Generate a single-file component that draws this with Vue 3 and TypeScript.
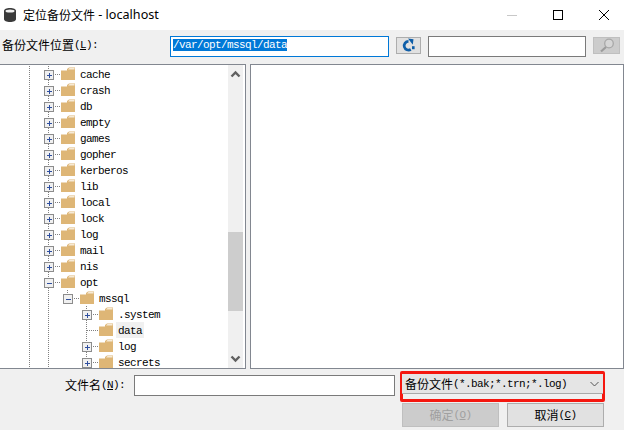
<script setup lang="ts">
interface Row {
  name: string
  guides: boolean[]
  exp: 'plus' | 'minus' | 'none'
  through: boolean
  top?: boolean
  selected?: boolean
}
const names = ['cache', 'crash', 'db', 'empty', 'games', 'gopher', 'kerberos', 'lib', 'local', 'lock', 'log', 'mail', 'nis']
const rows: Row[] = [
  ...names.map((name): Row => ({ name, guides: [true], exp: 'plus', through: true })),
  { name: 'opt', guides: [true], exp: 'minus', through: true },
  { name: 'mssql', guides: [true, true], exp: 'minus', through: false, top: true },
  { name: '.system', guides: [true, true, false], exp: 'plus', through: true },
  { name: 'data', guides: [true, true, false], exp: 'none', through: true, selected: true },
  { name: 'log', guides: [true, true, false], exp: 'plus', through: true },
  { name: 'secrets', guides: [true, true, false], exp: 'plus', through: true }
]
</script>

<template>
  <div class="win">
    <header class="title">
      <svg class="dbicon" width="14" height="14" viewBox="0 0 14 14">
        <path d="M1 3C1 1 3.500 0 7 0s6 1 6 3v8c0 2-2.500 3-6 3s-6-1-6-3z" fill="#3a3a3a" />
        <ellipse cx="7" cy="3" rx="4.500" ry="1.500" fill="#f0f0f0" />
      </svg>
      <span class="cjk-title">定位备份文件</span><span class="title-en">&nbsp;- localhost</span>
      <div class="controls">
        <span class="ctl"><svg width="12" height="12" viewBox="0 0 12 12"><path d="M1 6.500h10" stroke="#c8c8c8" /></svg></span>
        <span class="ctl"><svg width="12" height="12" viewBox="0 0 12 12"><rect x="1.500" y="1.500" width="9" height="9" fill="none" stroke="#000" /></svg></span>
        <span class="ctl"><svg width="12" height="12" viewBox="0 0 12 12"><path d="M1 1l10 10M11 1L1 11" stroke="#000" fill="none" /></svg></span>
      </div>
    </header>

    <div class="toolbar">
      <label class="path-label"><span class="cjk">备份文件位置</span><span class="mono">(<u>L</u>):</span></label>
      <div class="path-input"><span class="mono sel">/var/opt/mssql/data</span></div>
      <button class="refresh">
        <svg width="15" height="15" viewBox="0 0 15 15">
          <path d="M7.500 3.300A4.400 4.400 0 1 0 9.800 11.500" fill="none" stroke="#0f5ea8" stroke-width="2.700" />
          <path d="M7 0.500L12.500 1.200 11.800 6.800z" fill="#0f5ea8" />
          <rect x="11" y="8.200" width="2.600" height="3" fill="#0f5ea8" />
        </svg>
      </button>
      <div class="search-input"></div>
      <button class="search" disabled>
        <svg width="18" height="15" viewBox="0 0 18 15">
          <circle cx="11" cy="5.500" r="4.300" fill="#d6d6d6" stroke="#a8a8a8" stroke-width="1.300" />
          <path d="M8 9L3 13.500" stroke="#9c9c9c" stroke-width="2.200" />
        </svg>
      </button>
    </div>

    <div class="panes">
      <div class="tree-pane">
        <div class="tree">
          <div v-for="(r, i) in rows" :key="i" class="row">
            <span v-for="(g, j) in r.guides" :key="j" class="col" :class="{ vline: g }"></span>
            <span v-if="r.exp === 'none'" class="col vline hline"></span>
            <span v-else class="col hline" :class="{ vline: r.through, vtop: r.top }">
              <span class="box">
                <svg width="9" height="9" viewBox="0 0 9 9">
                  <path d="M2 4.500h5" stroke="#2f4f9f" stroke-width="1" />
                  <path v-if="r.exp === 'plus'" d="M4.500 2v5" stroke="#2f4f9f" stroke-width="1" />
                </svg>
              </span>
            </span>
            <svg class="folder" width="14" height="14" viewBox="0 0 14 14">
              <path d="M0 3.500h6V2l2-1.500h6V13H0z" fill="#deb676" />
              <path d="M7 2.500L8.500 1H13.500v1.500z" fill="#f6ead6" />
            </svg>
            <span class="node mono" :class="{ selected: r.selected }">{{ r.name }}</span>
          </div>
        </div>
        <div class="scroll">
          <svg class="arrow" width="15" height="18" viewBox="0 0 15 18"><path d="M3.500 11.500l4-4 4 4" fill="none" stroke="#606060" stroke-width="2.400" /></svg>
          <div class="track"><div class="thumb"></div></div>
          <svg class="arrow" width="15" height="18" viewBox="0 0 15 18"><path d="M3.500 6.500l4 4 4-4" fill="none" stroke="#606060" stroke-width="2.400" /></svg>
        </div>
      </div>
      <div class="list-pane"></div>
    </div>

    <footer class="footer">
      <div class="file-row">
        <label class="file-label"><span class="cjk">文件名</span><span class="mono">(<u>N</u>):</span></label>
        <div class="file-input"></div>
        <div class="redbox">
          <div class="combo">
            <span class="cjk">备份文件</span><span class="mono">(*.bak;*.trn;*.log)</span>
            <svg class="caret" width="9" height="6" viewBox="0 0 9 6"><path d="M.5 1L4.500 5l4-4" fill="none" stroke="#555" /></svg>
          </div>
        </div>
      </div>
      <div class="btn-row">
        <button class="btn off"><span class="cjk">确定</span><span class="mono">(<u>O</u>)</span></button>
        <button class="btn"><span class="cjk">取消</span><span class="mono">(<u>C</u>)</span></button>
      </div>
    </footer>
  </div>
</template>

<style scoped>
.win {
  width: 624px;
  height: 430px;
  display: flex;
  flex-direction: column;
  background: #f0f0f0;
  overflow: hidden;
  color: #000;
}
.cjk { font: 12px/16px "Noto Sans CJK SC", sans-serif; }
.mono {
  font: 11px/16px "Liberation Mono", monospace;
  letter-spacing: -0.6px;
}
.title {
  height: 30px;
  flex: none;
  background: #fff;
  display: flex;
  align-items: center;
  padding-left: 3px;
}
.dbicon { margin-right: 6px; }
.cjk-title { font: 12px/16px "Noto Sans CJK SC", sans-serif; }
.title-en { font: 12.600px/16px "Noto Sans", sans-serif; }
.controls { margin-left: auto; display: flex; gap: 34px; margin-right: 14px; }
.ctl { width: 12px; display: flex; justify-content: center; }
.toolbar {
  height: 34px;
  flex: none;
  display: flex;
  align-items: flex-start;
  padding-left: 2px;
}
.path-label { width: 168px; margin-top: 7px; flex: none; display: flex; }
.path-input {
  width: 219px;
  height: 21px;
  margin-top: 6px;
  border: 1px solid #0078d7;
  background: #fff;
  box-sizing: border-box;
  padding: 2px 0 0 2px;
  flex: none;
}
.sel {
  display: inline-block;
  width: 114px;
  height: 12px;
  line-height: 12px;
  background: #0078d7;
  color: #fff;
  vertical-align: top;
}
.refresh, .search {
  flex: none;
  height: 17px;
  margin-top: 7px;
  padding: 0;
  display: flex;
  align-items: center;
  justify-content: center;
  box-sizing: border-box;
}
.refresh { width: 25px; margin-left: 7px; background: #e1e1e1; border: 1px solid #adadad; }
.search { width: 27px; margin-left: 7px; background: #ccc; border: 1px solid #bfbfbf; }
.search-input {
  width: 158px;
  height: 21px;
  margin: 6px 0 0 7px;
  border: 1px solid #7a7a7a;
  background: #fff;
  box-sizing: border-box;
  flex: none;
}
.panes { height: 305px; flex: none; display: flex; }
.tree-pane {
  width: 246px;
  flex: none;
  box-sizing: border-box;
  border: 1px solid #828790;
  border-left: 0;
  background: #fff;
  display: flex;
  overflow: hidden;
  padding-right: 2px;
}
.tree { flex: 1; padding-top: 1px; overflow: hidden; }
.row { height: 16px; display: flex; padding-left: 20px; align-items: stretch; }
.col { width: 19px; flex: none; position: relative; }
.vline {
  background-image: repeating-linear-gradient(to bottom, #808080 0 1px, transparent 1px 2px);
  background-size: 1px 100%;
  background-position: 9px 0;
  background-repeat: no-repeat;
}
.vtop {
  background-image: repeating-linear-gradient(to bottom, #808080 0 1px, transparent 1px 2px);
  background-size: 1px 4px;
  background-position: 9px 0;
  background-repeat: no-repeat;
}
.hline::after {
  content: "";
  position: absolute;
  left: 10px;
  right: -2px;
  top: 8px;
  height: 1px;
  background-image: repeating-linear-gradient(to right, #808080 0 1px, transparent 1px 2px);
}
.box {
  position: absolute;
  left: 5px;
  top: 4px;
  width: 8px;
  height: 8px;
  border: 1px solid #8c8c8c;
  background: #f0f0f0;
  z-index: 1;
  display: block;
}
.box svg { display: block; margin: -0.5px; }
.folder { margin: 1px 0 0 3px; flex: none; }
.node { margin: 0 0 0 3px; padding: 1px 2px 0; height: 15px; }
.selected { background: #f0f0f0; }
.scroll {
  width: 15px;
  flex: none;
  background: #f0f0f0;
  display: flex;
  flex-direction: column;
}
.arrow { flex: none; display: block; }
.track { flex: 1; padding-top: 149px; }
.thumb { height: 79px; background: #cdcdcd; }
.list-pane {
  width: 374px;
  margin-left: 4px;
  flex: none;
  box-sizing: border-box;
  background: #fff;
  border: 1px solid #828790;
}
.footer { flex: 1; display: flex; flex-direction: column; padding-top: 2px; }
.file-row { display: flex; height: 32px; }
.file-label { width: 134px; padding: 6px 0 0 65px; box-sizing: border-box; flex: none; display: flex; }
.file-input {
  width: 261px;
  height: 21px;
  margin-top: 4px;
  border: 1px solid #7a7a7a;
  background: #fff;
  box-sizing: border-box;
  flex: none;
}
.redbox {
  width: 205px;
  height: 31px;
  margin-left: 5px;
  border: 3px solid #f5170f;
  border-radius: 2px;
  box-sizing: border-box;
  flex: none;
}
.combo {
  height: 20px;
  margin: 0 -1px;
  box-sizing: border-box;
  background: #e5e5e5;
  border-bottom: 1px solid #a9a9a9;
  padding: 1px 0 0 3px;
  display: flex;
  align-items: center;
  position: relative;
}
.caret { position: absolute; right: 4px; top: 7px; }
.btn-row { display: flex; padding-left: 402px; gap: 8px; }
.btn {
  width: 97px;
  height: 24px;
  padding: 0;
  box-sizing: border-box;
  background: #e1e1e1;
  border: 1px solid #adadad;
  color: #000;
  display: flex;
  align-items: center;
  justify-content: center;
}
.off { background: #ccc; border-color: #bfbfbf; color: #a0a0a0; }
</style>
